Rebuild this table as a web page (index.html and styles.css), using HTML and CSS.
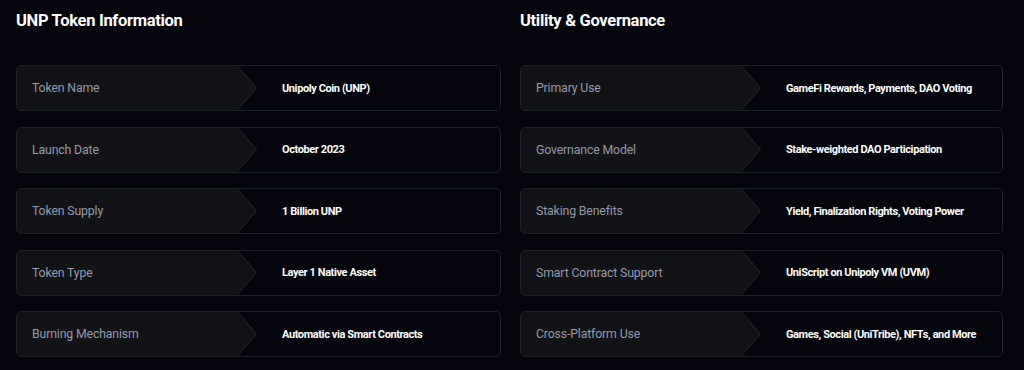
FILE: index.html
```html
<!DOCTYPE html>
<html lang="en">
<head>
<meta charset="utf-8">
<title>UNP Token Information</title>
<link rel="stylesheet" href="styles.css">
</head>
<body>
<main class="page">
  <section class="panel">
    <h2 class="title">UNP Token Information</h2>
    <div class="rows">
      <div class="row"><div class="label"><span>Token Name</span></div><div class="value">Unipoly Coin (UNP)</div></div>
      <div class="row"><div class="label"><span>Launch Date</span></div><div class="value">October 2023</div></div>
      <div class="row"><div class="label"><span>Token Supply</span></div><div class="value">1 Billion UNP</div></div>
      <div class="row"><div class="label"><span>Token Type</span></div><div class="value">Layer 1 Native Asset</div></div>
      <div class="row"><div class="label"><span>Burning Mechanism</span></div><div class="value">Automatic via Smart Contracts</div></div>
    </div>
  </section>
  <section class="panel">
    <h2 class="title">Utility &amp; Governance</h2>
    <div class="rows">
      <div class="row"><div class="label"><span>Primary Use</span></div><div class="value">GameFi Rewards, Payments, DAO Voting</div></div>
      <div class="row"><div class="label"><span>Governance Model</span></div><div class="value">Stake-weighted DAO Participation</div></div>
      <div class="row"><div class="label"><span>Staking Benefits</span></div><div class="value">Yield, Finalization Rights, Voting Power</div></div>
      <div class="row"><div class="label"><span>Smart Contract Support</span></div><div class="value">UniScript on Unipoly VM (UVM)</div></div>
      <div class="row"><div class="label"><span>Cross-Platform Use</span></div><div class="value">Games, Social (UniTribe), NFTs, and More</div></div>
    </div>
  </section>
</main>
</body>
</html>
```
FILE: styles.css
```css
html, body {
  margin: 0;
  padding: 0;
  background: #05060d;
}
body {
  font-family: Roboto, "Liberation Sans", sans-serif;
  color: #ffffff;
}
.page {
  display: grid;
  grid-template-columns: 485px 483px;
  column-gap: 19px;
  padding: 9px 0 0 16px;
}
.title {
  margin: 0;
  font-size: 16.5px;
  line-height: 24px;
  font-weight: 700;
  color: #ffffff;
  letter-spacing: -0.3px;
}
.rows {
  display: flex;
  flex-direction: column;
  gap: 15.5px;
  margin-top: 32px;
}
.row {
  display: flex;
  align-items: stretch;
  height: 46px;
  box-sizing: border-box;
  border: 1px solid #202229;
  border-radius: 5px;
  overflow: hidden;
}
.label {
  position: relative;
  width: 240px;
  flex: none;
  display: flex;
  align-items: center;
  padding-left: 15px;
  box-sizing: border-box;
  font-size: 12.3px;
  color: #959aae;
  letter-spacing: -0.15px;
}
.label::before,
.label::after {
  content: "";
  position: absolute;
  inset: 0;
}
.label::before {
  background: #23252c;
  clip-path: polygon(0 0, calc(100% - 19px) 0, 100% 50%, calc(100% - 19px) 100%, 0 100%);
}
.label::after {
  background: #121317;
  clip-path: polygon(0 0, calc(100% - 20px) 0, calc(100% - 1.4px) 50%, calc(100% - 20px) 100%, 0 100%);
}
.label span {
  position: relative;
  z-index: 1;
}
.value {
  display: flex;
  align-items: center;
  padding-left: 25px;
  font-size: 11px;
  font-weight: 700;
  color: #ffffff;
  letter-spacing: -0.4px;
}
```
